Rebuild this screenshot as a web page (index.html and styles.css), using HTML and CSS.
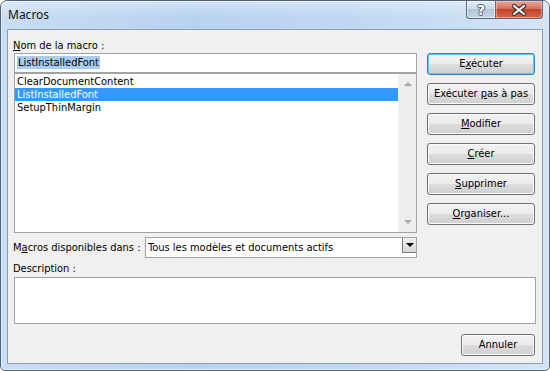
FILE: index.html
```html
<!DOCTYPE html>
<html lang="fr">
<head>
    <meta charset="UTF-8">
    <title>Macros</title>
    <link rel="stylesheet" href="styles.css">
</head>
<body>
    <div class="window">
        <div class="titlebar">
            <span class="title">Macros</span>
            <div class="caption-btns">
                <div class="cap help">?</div>
                <div class="cap close">
                    <svg width="46" height="18" viewBox="0 0 46 18">
                        <path d="M18 5 L28 13 M28 5 L18 13" stroke="#3b2a28" stroke-width="4.2" stroke-linecap="round" fill="none"/>
                        <path d="M18 5 L28 13 M28 5 L18 13" stroke="#ffffff" stroke-width="2.2" stroke-linecap="round" fill="none"/>
                    </svg>
                </div>
            </div>
        </div>

        <div class="client">
            <div class="top">
                <div class="left">
                    <div class="label"><u>N</u>om de la macro :</div>
                    <div class="name-input"><span class="sel">ListInstalledFont</span></div>
                    <div class="listbox">
                        <ul class="items">
                            <li>ClearDocumentContent</li>
                            <li class="selected">ListInstalledFont</li>
                            <li>SetupThinMargin</li>
                        </ul>
                        <div class="vscroll">
                            <span class="arrow up"></span>
                            <span class="arrow down"></span>
                        </div>
                    </div>
                    <div class="avail-row">
                        <span class="label avail-label">M<u>a</u>cros disponibles dans :</span>
                        <div class="combo">
                            <span class="combo-text">Tous les modèles et documents actifs</span>
                            <span class="combo-btn"><span class="tri"></span></span>
                        </div>
                    </div>
                </div>
                <div class="buttons">
                    <button class="btn default">E<u>x</u>écuter</button>
                    <button class="btn">Exécuter <u>p</u>as à pas</button>
                    <button class="btn"><u>M</u>odifier</button>
                    <button class="btn"><u>C</u>réer</button>
                    <button class="btn"><u>S</u>upprimer</button>
                    <button class="btn"><u>O</u>rganiser...</button>
                </div>
            </div>

            <div class="label desc-label">Description :</div>
            <div class="desc-box"></div>

            <div class="footer">
                <button class="btn cancel">Annuler</button>
            </div>
        </div>
    </div>
</body>
</html>
```

FILE: styles.css
```css
body {
    margin: 0;
    padding: 0;
    background: #ffffff;
    font-family: 'DejaVu Sans Condensed', 'DejaVu Sans', sans-serif;
    font-size: 11px;
    color: #000000;
}

.window {
    width: 550px;
    height: 371px;
    box-sizing: border-box;
    border: 1px solid #4f647c;
    border-radius: 7px 7px 5px 5px;
    background: linear-gradient(to right, #c9ddf3 0%, #b7d2f0 35%, #c0d8f3 65%, #d3e4f6 100%);
    display: flex;
    flex-direction: column;
    overflow: hidden;
    box-shadow: inset 0 0 0 1px #e4eefa;
}

/* title bar */
.titlebar {
    height: 28px;
    display: flex;
    align-items: flex-start;
    background: linear-gradient(to bottom, rgba(255, 255, 255, 0.35), rgba(255, 255, 255, 0) 60%);
}

.title {
    font-family: 'Noto Sans', sans-serif;
    font-size: 12px;
    color: #111111;
    margin-left: 7px;
    margin-top: 6px;
    line-height: 16px;
}

.caption-btns {
    margin-left: auto;
    margin-right: 6px;
    display: flex;
}

.cap {
    height: 18px;
    box-sizing: border-box;
    border: 1px solid #5a6b80;
    border-top: none;
    display: flex;
    align-items: center;
    justify-content: center;
}

.help {
    width: 29px;
    border-right: none;
    border-radius: 0 0 0 4px;
    background: linear-gradient(to bottom, #e4ecf5 0%, #cdd9e7 45%, #b5c5d8 50%, #c8d6e6 100%);
    box-shadow: inset 0 0 0 1px rgba(255, 255, 255, 0.5);
    font-family: 'DejaVu Sans', sans-serif;
    font-weight: bold;
    font-size: 14px;
    color: #ffffff;
    text-shadow: 1px 0 0 #4a5a6e, -1px 0 0 #4a5a6e, 0 1px 0 #4a5a6e, 0 -1px 0 #4a5a6e;
}

.close {
    width: 48px;
    border-radius: 0 0 4px 0;
    background: linear-gradient(to bottom, #e9a99b 0%, #d6705b 45%, #c2432b 50%, #d46a4e 100%);
    box-shadow: inset 0 0 0 1px rgba(255, 220, 210, 0.45);
}

/* client area */
.client {
    flex: 1;
    margin: 0 6px 6px 6px;
    border: 1px solid #8e9eb2;
    background: #f0f0f0;
    padding: 9px 7px 0 6px;
    display: flex;
    flex-direction: column;
}

.label {
    line-height: 13px;
    height: 13px;
    white-space: nowrap;
}

u {
    text-decoration: underline;
    text-underline-offset: 1px;
}

.top {
    display: flex;
    gap: 10px;
}

.left {
    width: 403px;
    display: flex;
    flex-direction: column;
}

.left > .label {
    margin-left: -1px;
}

.name-input {
    margin-top: 1px;
    height: 20px;
    box-sizing: border-box;
    border: 1px solid #a3a3a3;
    background: #ffffff;
    padding: 2px 0 0 2px;
}

.sel {
    background: #a9cdf2;
    display: inline-block;
    line-height: 13px;
    padding: 0 1px;
}

.listbox {
    height: 160px;
    box-sizing: border-box;
    border: 1px solid #a3a3a3;
    background: #ffffff;
    display: flex;
}

.items {
    list-style: none;
    margin: 0;
    padding: 1px 0 0 0;
    flex: 1;
}

.items li {
    height: 13px;
    line-height: 13px;
    padding-left: 2px;
}

.items li.selected {
    background: #3399ff;
    color: #ffffff;
}

.vscroll {
    width: 17px;
    background: #eeeeee;
    border-left: 1px solid #f4f4f4;
    display: flex;
    flex-direction: column;
    justify-content: space-between;
    align-items: center;
    padding: 8px 0 8px 0;
}

.arrow {
    width: 0;
    height: 0;
    border-left: 4px solid transparent;
    border-right: 4px solid transparent;
}

.arrow.up {
    border-bottom: 4px solid #a8a8a8;
}

.arrow.down {
    border-top: 4px solid #a8a8a8;
}

.avail-row {
    margin-top: 4px;
    display: flex;
    align-items: center;
}

.avail-label {
    width: 132px;
    margin-left: -1px;
}

.combo {
    flex: 1;
    height: 21px;
    box-sizing: border-box;
    border: 1px solid #a3a3a3;
    background: #ffffff;
    display: flex;
    align-items: center;
}

.combo-text {
    flex: 1;
    padding-left: 2px;
}

.combo-btn {
    width: 14px;
    height: 15px;
    margin-right: 0;
    align-self: flex-start;
    box-sizing: border-box;
    border: 1px solid #7b7b7b;
    border-top: none;
    border-right: none;
    background: linear-gradient(to bottom, #f0f0f0, #d8d8d8);
    display: flex;
    align-items: center;
    justify-content: center;
}

.tri {
    width: 0;
    height: 0;
    border-left: 4px solid transparent;
    border-right: 4px solid transparent;
    border-top: 4px solid #000000;
}

/* buttons */
.buttons {
    width: 108px;
    margin-top: 14px;
    display: flex;
    flex-direction: column;
    gap: 8px;
}

.btn {
    height: 22px;
    width: 108px;
    box-sizing: border-box;
    border: 1px solid #707070;
    border-radius: 3px;
    background: linear-gradient(to bottom, #f2f2f2 0%, #ebebeb 50%, #dddddd 50%, #cfcfcf 100%);
    box-shadow: inset 0 0 0 1px #fbfbfb;
    font-family: inherit;
    font-size: 11px;
    color: #000000;
    padding: 0;
    line-height: 18px;
}

.btn.default {
    border-color: #3c7fb1;
    box-shadow: inset 0 0 0 1px #56cdf6;
}

.desc-label {
    margin-top: 4px;
    margin-left: -1px;
}

.desc-box {
    margin-top: 2px;
    height: 47px;
    margin-right: -1px;
    box-sizing: border-box;
    border: 1px solid #a3a3a3;
    background: #ffffff;
}

.footer {
    display: flex;
    justify-content: flex-end;
    margin-top: 10px;
}

.btn.cancel {
    width: 74px;
}
```
